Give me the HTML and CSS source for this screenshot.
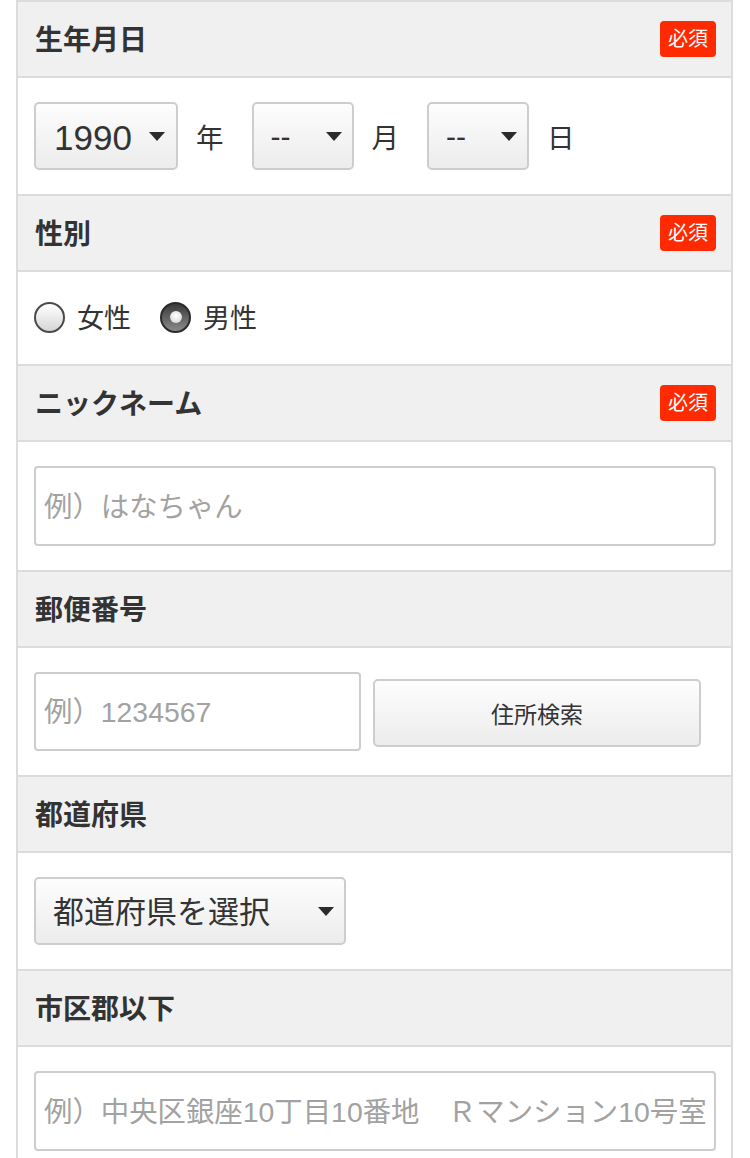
FILE: index.html
```html
<!DOCTYPE html>
<html lang="ja">
<head>
<meta charset="utf-8">
<title>会員登録</title>
<link rel="stylesheet" href="styles.css">
</head>
<body>
<div class="form">
  <section class="field">
    <div class="field-head"><h2>生年月日</h2><span class="req">必須</span></div>
    <div class="field-body date-row">
      <div class="select sel-year"><span>1990</span><svg class="caret" width="16" height="9" viewBox="0 0 16 9"><path d="M0 0H16L8 9Z"/></svg></div>
      <span class="unit">年</span>
      <div class="select sel-small"><span>--</span><svg class="caret" width="16" height="9" viewBox="0 0 16 9"><path d="M0 0H16L8 9Z"/></svg></div>
      <span class="unit">月</span>
      <div class="select sel-small"><span>--</span><svg class="caret" width="16" height="9" viewBox="0 0 16 9"><path d="M0 0H16L8 9Z"/></svg></div>
      <span class="unit">日</span>
    </div>
  </section>
  <section class="field">
    <div class="field-head"><h2>性別</h2><span class="req">必須</span></div>
    <div class="field-body radio-row">
      <label class="radio"><span class="dot"></span><span class="rtxt">女性</span></label>
      <label class="radio"><span class="dot on"></span><span class="rtxt">男性</span></label>
    </div>
  </section>
  <section class="field">
    <div class="field-head"><h2>ニックネーム</h2><span class="req">必須</span></div>
    <div class="field-body">
      <div class="input full"><span class="ph">例）はなちゃん</span></div>
    </div>
  </section>
  <section class="field">
    <div class="field-head"><h2>郵便番号</h2></div>
    <div class="field-body zip-row">
      <div class="input zip"><span class="ph">例）1234567</span></div>
      <div class="btn">住所検索</div>
    </div>
  </section>
  <section class="field">
    <div class="field-head"><h2>都道府県</h2></div>
    <div class="field-body">
      <div class="select sel-pref"><span>都道府県を選択</span><svg class="caret" width="16" height="9" viewBox="0 0 16 9"><path d="M0 0H16L8 9Z"/></svg></div>
    </div>
  </section>
  <section class="field">
    <div class="field-head"><h2>市区郡以下</h2></div>
    <div class="field-body">
      <div class="input full"><span class="ph">例）中央区銀座10丁目10番地　Ｒマンション10号室</span></div>
    </div>
  </section>
</div>
</body>
</html>
```
FILE: styles.css
```css
* { box-sizing: border-box; }
html, body { margin: 0; padding: 0; background: #fff; }
body {
  font-family: "Liberation Sans", "Noto Sans CJK JP", sans-serif;
  color: #333;
  overflow: hidden;
}
.form {
  margin-left: 16px;
  width: 717px;
  border: 2px solid #dcdcdc;
  border-bottom: none;
}
.field-head {
  height: 76px;
  background: #f0f0f0;
  border-bottom: 2px solid #dcdcdc;
  display: flex;
  align-items: center;
  justify-content: space-between;
  padding: 0 15px 0 17px;
}
.field-head h2 {
  margin: 4px 0 0;
  font-size: 28px;
  font-weight: 700;
  line-height: 1;
  color: #333;
}
.req {
  background: #ff2a00;
  color: #fff;
  font-size: 20px;
  line-height: 36px;
  height: 36px;
  padding: 0 8px;
  border-radius: 4px;
}
.field-body {
  background: #fff;
  border-bottom: 2px solid #dcdcdc;
  padding: 24px 15px 24px 16px;
}
.date-row { display: flex; align-items: center; }
.select {
  height: 68px;
  border: 2px solid #cdcdcd;
  border-radius: 5px;
  background: linear-gradient(#fdfdfd, #ececec);
  display: flex;
  align-items: center;
  justify-content: space-between;
  color: #333;
  line-height: 1;
}
.select > span { padding-top: 2px; }
.caret { fill: #2b2b2b; flex: none; }
.sel-year { width: 144px; padding: 0 11px 0 18px; font-size: 35px; }
.sel-small { width: 102px; padding: 0 10px 0 17px; font-size: 30px; }
.sel-pref { width: 312px; padding: 0 10px 0 17px; font-size: 31px; }
.unit {
  font-size: 27.5px;
  line-height: 1;
  padding-top: 6px;
  margin: 0 28px 0 18px;
  color: #333;
}
.radio-row {
  height: 94px;
  display: flex;
  align-items: center;
  gap: 29px;
  padding-top: 0;
  padding-bottom: 2px;
}
.radio {
  display: flex;
  align-items: center;
  gap: 12px;
  font-size: 27px;
  line-height: 1;
  color: #333;
}
.rtxt { padding-top: 5px; }
.dot {
  width: 31px;
  height: 31px;
  border-radius: 50%;
  border: 2px solid #4a4a4a;
  background: linear-gradient(#ffffff, #d6d6d6);
  display: flex;
  align-items: center;
  justify-content: center;
}
.dot.on {
  border-color: #2a2a2a;
  background: linear-gradient(#3a3a3a, #8a8a8a);
}
.dot.on::after {
  content: "";
  width: 12px;
  height: 12px;
  border-radius: 50%;
  background: radial-gradient(circle at 50% 40%, #ffffff, #cfcfcf);
}
.input {
  height: 80px;
  border: 2px solid #cdcdcd;
  border-radius: 4px;
  background: #fff;
  display: flex;
  align-items: center;
  padding: 0 8px;
  white-space: nowrap;
  overflow: hidden;
}
.ph { font-size: 28.4px; line-height: 1; color: #a2a2a2; padding-top: 2px; }
.full { width: 682px; }
.zip-row { display: flex; align-items: center; gap: 12px; }
.zip { width: 327px; height: 79px; }
.btn {
  width: 328px;
  height: 68px;
  border: 2px solid #cdcdcd;
  border-radius: 5px;
  background: linear-gradient(#fdfdfd, #ececec);
  display: flex;
  align-items: center;
  justify-content: center;
  font-size: 23px;
  color: #333;
  margin-top: 3px;
}
```
